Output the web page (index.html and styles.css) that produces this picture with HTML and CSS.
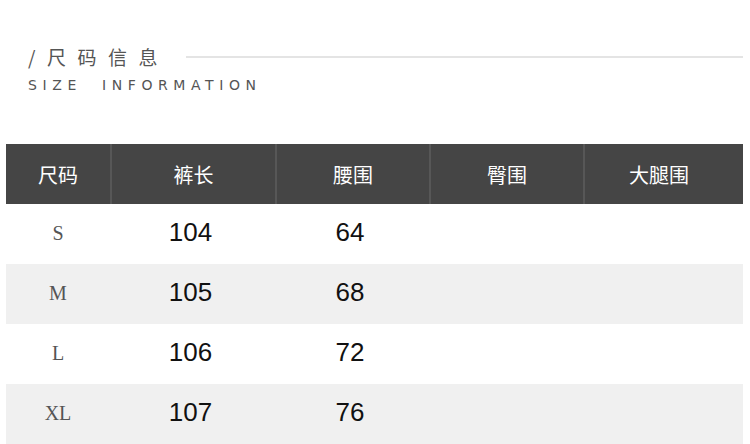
FILE: index.html
```html
<!DOCTYPE html>
<html lang="zh">
<head>
<meta charset="utf-8">
<link rel="stylesheet" href="styles.css">
</head>
<body>
<div class="page">
  <div class="title">
    <div class="title-top">
      <span class="cn">/尺码信息</span>
      <span class="rule"></span>
    </div>
    <div class="en">SIZE&nbsp;&nbsp;INFORMATION</div>
  </div>
  <div class="table">
    <div class="row head">
      <div class="cell">尺码</div>
      <div class="cell">裤长</div>
      <div class="cell">腰围</div>
      <div class="cell">臀围</div>
      <div class="cell last">大腿围</div>
    </div>
    <div class="row">
      <div class="cell size">S</div>
      <div class="cell num">104</div>
      <div class="cell num">64</div>
      <div class="cell"></div>
      <div class="cell"></div>
    </div>
    <div class="row alt">
      <div class="cell size">M</div>
      <div class="cell num">105</div>
      <div class="cell num">68</div>
      <div class="cell"></div>
      <div class="cell"></div>
    </div>
    <div class="row">
      <div class="cell size">L</div>
      <div class="cell num">106</div>
      <div class="cell num">72</div>
      <div class="cell"></div>
      <div class="cell"></div>
    </div>
    <div class="row alt">
      <div class="cell size">XL</div>
      <div class="cell num">107</div>
      <div class="cell num">76</div>
      <div class="cell"></div>
      <div class="cell"></div>
    </div>
  </div>
</div>
</body>
</html>
```
FILE: styles.css
```css
html, body {
  margin: 0;
  padding: 0;
  background: #ffffff;
}
.page {
  width: 750px;
  height: 444px;
  overflow: hidden;
  font-family: "Liberation Sans", "Noto Sans CJK SC", sans-serif;
}
.title {
  padding: 44px 0 0 28px;
  height: 100px;
  box-sizing: border-box;
}
.title-top {
  display: flex;
  align-items: center;
  height: 26px;
}
.cn {
  font-family: "Noto Sans CJK SC", sans-serif;
  font-size: 19px;
  font-weight: 400;
  letter-spacing: 11.5px;
  color: #555555;
  line-height: 26px;
  white-space: nowrap;
}
.rule {
  margin-left: 17px;
  width: 557px;
  height: 2px;
  background: #e4e4e4;
}
.en {
  margin-top: 7px;
  font-family: "DejaVu Sans", sans-serif;
  font-size: 14px;
  letter-spacing: 5.6px;
  color: #555555;
  line-height: 16px;
  white-space: nowrap;
}
.table {
  margin: 44px 0 0 6px;
  width: 737px;
}
.row {
  display: grid;
  grid-template-columns: 104px 165px 154px 154px 160px;
  height: 60px;
}
.row.alt {
  background: #f0f0f0;
}
.row.head {
  background: #454545;
  color: #ffffff;
}
.cell {
  display: flex;
  align-items: center;
  justify-content: center;
}
.head .cell {
  font-family: "Noto Sans CJK SC", sans-serif;
  font-size: 20px;
}
.head .cell.last {
  padding-right: 10px;
}
.head .cell + .cell {
  border-left: 2px solid #575757;
}
.size {
  font-family: "Liberation Serif", serif;
  font-size: 20px;
  color: #555555;
  padding-bottom: 2px;
  box-sizing: border-box;
}
.num {
  font-family: "Liberation Sans", sans-serif;
  font-size: 26px;
  color: #111111;
  padding: 0 4px 3px 0;
  box-sizing: border-box;
}
```
